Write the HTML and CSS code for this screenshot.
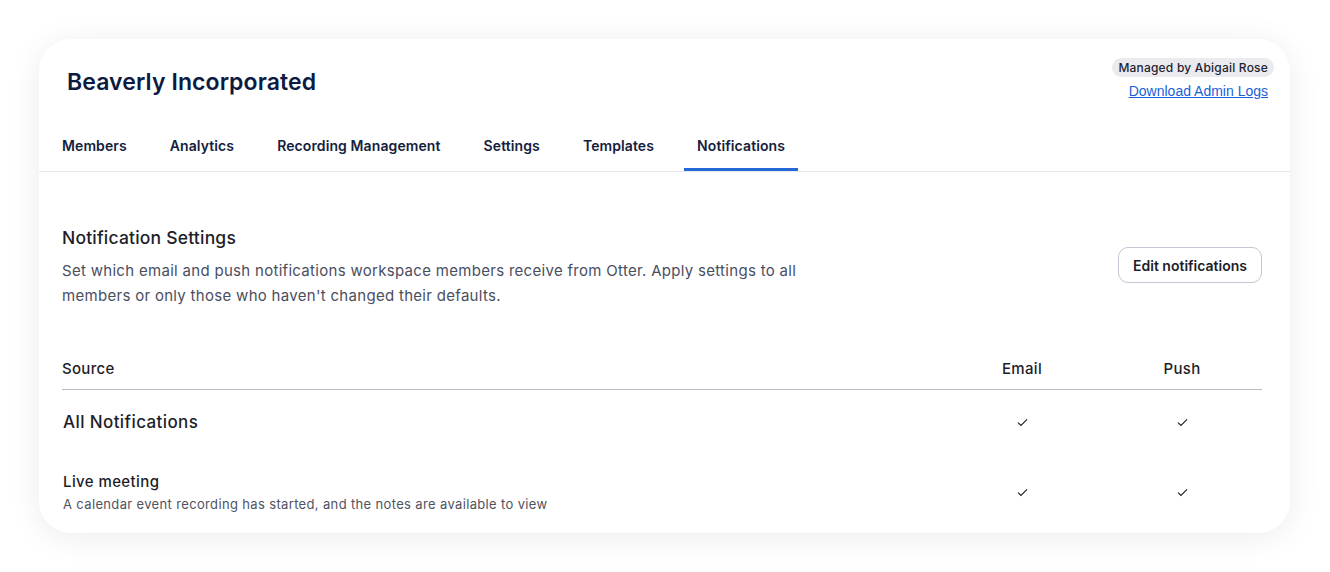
FILE: index.html
```html
<!DOCTYPE html>
<html lang="en">
<head>
  <meta charset="UTF-8">
  <meta name="viewport" content="width=device-width, initial-scale=1.0">
  <title>Beaverly Incorporated - Notifications</title>
  <link rel="stylesheet" href="styles.css">
</head>
<body>
  <div class="page">
    <div class="card">
      <div class="card-head">
        <h1 class="org-name">Beaverly Incorporated</h1>
        <div class="admin">
          <span class="badge">Managed by Abigail Rose</span>
          <a class="logs-link" href="#">Download Admin Logs</a>
        </div>
      </div>

      <nav class="tabs">
        <a class="tab" href="#">Members</a>
        <a class="tab" href="#">Analytics</a>
        <a class="tab" href="#">Recording Management</a>
        <a class="tab" href="#">Settings</a>
        <a class="tab" href="#">Templates</a>
        <a class="tab active" href="#">Notifications</a>
      </nav>

      <section class="section">
        <div class="intro">
          <div class="intro-text">
            <h2 class="section-title">Notification Settings</h2>
            <p class="section-desc">Set which email and push notifications workspace members receive from Otter. Apply settings to all members or only those who haven't changed their defaults.</p>
          </div>
          <button class="btn">Edit notifications</button>
        </div>

        <div class="table">
          <div class="row head">
            <div class="cell-name">Source</div>
            <div class="cell-col">Email</div>
            <div class="cell-col">Push</div>
          </div>
          <div class="row all">
            <div class="cell-name">All Notifications</div>
            <div class="cell-col"><svg class="check" viewBox="0 0 12 10"><path d="M1 5.2 L4.3 8.3 L11 1.6"/></svg></div>
            <div class="cell-col"><svg class="check" viewBox="0 0 12 10"><path d="M1 5.2 L4.3 8.3 L11 1.6"/></svg></div>
          </div>
          <div class="row item">
            <div class="cell-name">
              <div class="item-name">Live meeting</div>
              <div class="item-desc">A calendar event recording has started, and the notes are available to view</div>
            </div>
            <div class="cell-col"><svg class="check" viewBox="0 0 12 10"><path d="M1 5.2 L4.3 8.3 L11 1.6"/></svg></div>
            <div class="cell-col"><svg class="check" viewBox="0 0 12 10"><path d="M1 5.2 L4.3 8.3 L11 1.6"/></svg></div>
          </div>
        </div>
      </section>
    </div>
  </div>
</body>
</html>
```

FILE: styles.css
```css
body {
  margin: 0;
  background: #fff;
  font-family: 'Inter', 'Noto Sans', sans-serif;
  color: #1d1e29;
}
.page {
  padding: 39px 40px 40px 39px;
}
.card {
  background: #fff;
  border-radius: 32px;
  box-shadow: 0 4px 32px rgba(0, 0, 0, 0.08);
  overflow: hidden;
}
.card-head {
  display: flex;
  justify-content: space-between;
  align-items: flex-start;
  padding: 19px 16px 0 28px;
}
.org-name {
  margin: 0;
  padding-top: 9px;
  font-size: 23px;
  line-height: 30px;
  font-weight: 600;
  color: #0c1b3f;
  letter-spacing: 0.1px;
}
.admin {
  display: flex;
  flex-direction: column;
  align-items: flex-end;
}
.badge {
  background: #ebebef;
  border-radius: 10px;
  padding: 0 6px;
  font-size: 12px;
  line-height: 19px;
  font-weight: 500;
  color: #222430;
  letter-spacing: 0.2px;
}
.logs-link {
  margin-top: 6px;
  margin-right: 6px;
  font-family: 'Liberation Sans', Arial, sans-serif;
  font-size: 14px;
  line-height: 16px;
  color: #1a5fd6;
}
.tabs {
  display: flex;
  gap: 17px;
  margin-top: 25px;
  padding-left: 10px;
  border-bottom: 1px solid #e7e8ec;
}
.tab {
  padding: 12px 13px;
  font-size: 14px;
  line-height: 20px;
  font-weight: 600;
  color: #14213d;
  text-decoration: none;
  letter-spacing: 0.1px;
  border-bottom: 3px solid transparent;
}
.tab.active {
  border-bottom-color: #2467d6;
}
.section {
  padding: 0 28px 20px 23px;
}
.intro {
  display: flex;
  justify-content: space-between;
  align-items: center;
  margin-top: 54px;
}
.section-title {
  margin: 0;
  font-size: 17.5px;
  line-height: 23px;
  font-weight: 500;
  color: #1d1e29;
  letter-spacing: 0.2px;
}
.section-desc {
  margin: 9px 0 0;
  max-width: 770px;
  font-size: 15px;
  line-height: 25px;
  color: #4a4e5f;
  letter-spacing: 0.3px;
}
.btn {
  margin-top: -4px;
  width: 144px;
  height: 36px;
  background: #fff;
  border: 1px solid #c4c7d3;
  border-radius: 10px;
  font-family: inherit;
  font-size: 14px;
  font-weight: 600;
  color: #1d1e29;
  cursor: pointer;
}
.table {
  margin-top: 49px;
}
.row {
  display: grid;
  grid-template-columns: 1fr 160px 160px;
  align-items: center;
}
.cell-col {
  display: flex;
  justify-content: center;
  align-items: center;
}
.row.head {
  padding: 1px 0 9px;
  border-bottom: 1px solid #b9bac6;
  font-size: 15px;
  line-height: 22px;
  font-weight: 500;
  letter-spacing: 0.3px;
}
.row.all {
  padding: 20px 0 19px;
  font-size: 17px;
  line-height: 24px;
  font-weight: 500;
  letter-spacing: 0.4px;
}
.row.all .cell-name {
  padding-left: 1px;
}
.row.item {
  padding-top: 19px;
}
.row.item .cell-name {
  padding-left: 1px;
}
.item-name {
  font-size: 15px;
  line-height: 20px;
  font-weight: 500;
  letter-spacing: 0.4px;
}
.item-desc {
  margin-top: 3px;
  font-size: 13px;
  line-height: 18px;
  color: #50535f;
  letter-spacing: 0.35px;
}
.check {
  width: 11px;
  height: 9px;
  fill: none;
  stroke: #1d1e29;
  stroke-width: 1.3;
}
```
